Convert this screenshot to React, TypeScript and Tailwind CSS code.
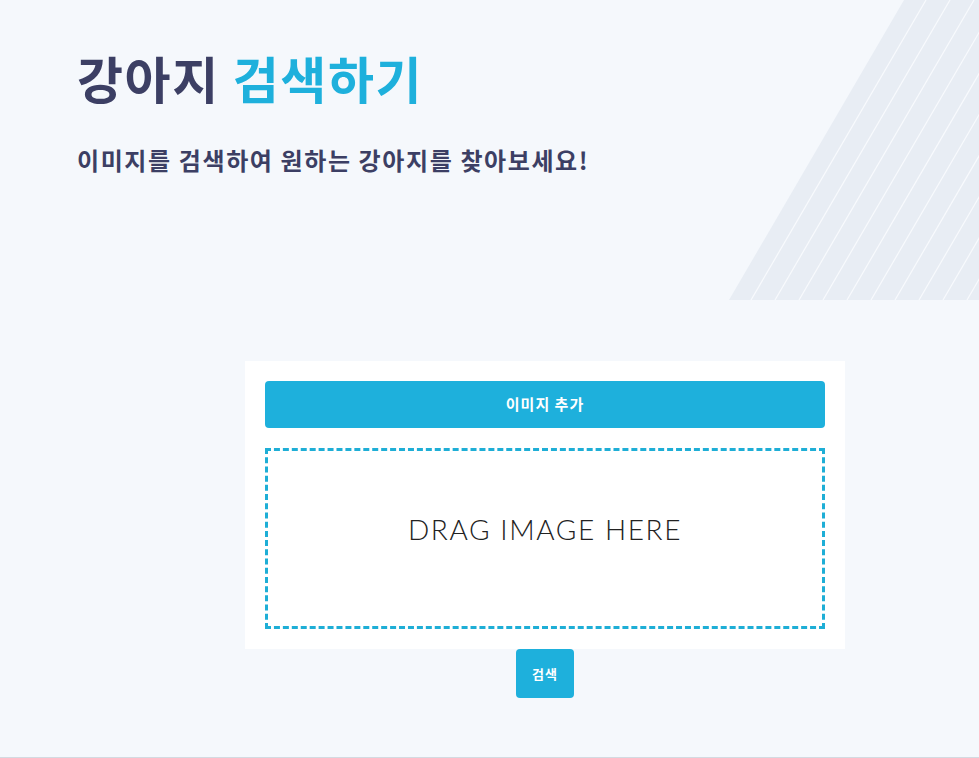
import React from 'react'

function Decoration() {
  const lines = Array.from({ length: 12 }, (_, i) => i)
  return (
    <svg
      className="absolute top-0 right-0 pointer-events-none"
      width="250"
      height="301"
      viewBox="0 0 250 301"
    >
      <defs>
        <clipPath id="slant">
          <polygon points="0,300 175,0 250,0 250,300" />
        </clipPath>
      </defs>
      <polygon points="0,300 175,0 250,0 250,300" fill="#e8edf4" />
      <g clipPath="url(#slant)" stroke="#f8fafd" strokeWidth="1.2">
        {lines.map((i) => {
          const x = 22 + i * 24
          return <line key={i} x1={x} y1={300} x2={x + 175} y2={0} />
        })}
      </g>
    </svg>
  )
}

export default function App() {
  return (
    <div
      className="relative min-h-[758px] bg-[#f5f8fc] border-b border-[#d3dae1] overflow-hidden"
      style={{ fontFamily: '"Noto Sans CJK KR", "Noto Sans", sans-serif' }}
    >
      <Decoration />
      <header className="relative h-[300px] pl-[77px] pt-[43px]">
        <h1 className="text-[50px] font-bold leading-[68px] tracking-[1.6px] text-[#3c3f64]">
          강아지 <span className="text-[#1eb0dc]">검색하기</span>
        </h1>
        <p className="mt-[33px] text-[24px] font-bold leading-[32px] tracking-[1.6px] text-[#3c3f64]">
          이미지를 검색하여 원하는 강아지를 찾아보세요!
        </p>
      </header>

      <main className="relative mt-[61px] ml-[245px] w-[600px] flex flex-col items-center">
        <section className="w-full bg-white p-5 flex flex-col gap-5">
          <button className="h-[47px] w-full rounded bg-[#1eb0dc] text-white text-[15px] font-bold tracking-[1px]">
            이미지 추가
          </button>
          <div className="h-[181px] pb-[20px] border-[3px] border-dashed border-[#1eaed6] flex items-center justify-center">
            <span
              className="text-[28px] font-light text-[#222] tracking-[1.6px]"
              style={{ fontFamily: 'Lato, "Open Sans", sans-serif' }}
            >
              DRAG IMAGE HERE
            </span>
          </div>
        </section>
        <button className="h-[49px] w-[58px] rounded bg-[#1eb0dc] text-white text-[13px] font-bold tracking-[1px]">
          검색
        </button>
      </main>
    </div>
  )
}
